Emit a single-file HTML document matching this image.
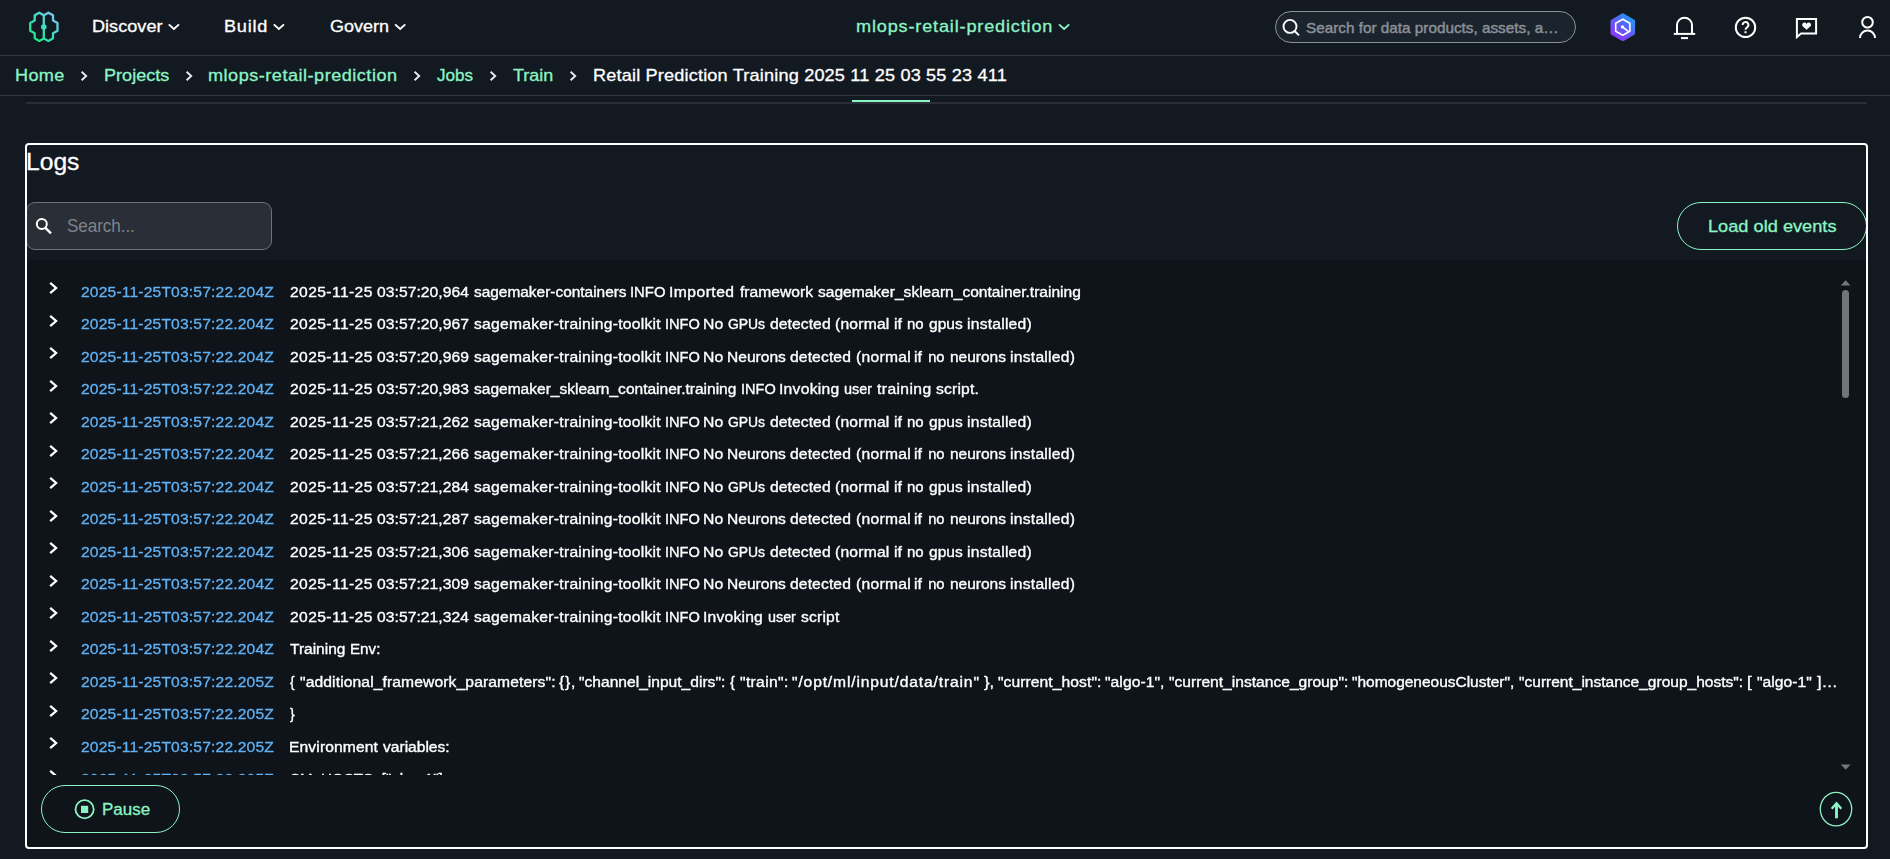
<!DOCTYPE html>
<html lang="en"><head><meta charset="utf-8"><title>Logs - Retail Prediction Training</title>
<style>
*{box-sizing:border-box;margin:0;padding:0}
html,body{width:1890px;height:859px;overflow:hidden;background:#131920;font-family:"Liberation Sans",sans-serif}
body{position:relative}
.t{position:absolute;white-space:pre;line-height:1;font-weight:400;transform-origin:0 0}
.t.m{-webkit-text-stroke:0.3px currentColor}
.t.sb{-webkit-text-stroke:0.45px currentColor}
.t.ts{-webkit-text-stroke:0.3px currentColor}
.logview .t.m{-webkit-text-stroke:0.36px currentColor}
.logview div{position:absolute;left:0;top:0}
.abs{position:absolute}
.hl{position:absolute;background:#292e38}
.panel{position:absolute;left:25px;top:143px;width:1843px;height:706px;border:2px solid #fff;border-radius:4px;z-index:3}
.logbg{position:absolute;left:27px;top:260px;width:1839px;height:587px;background:#0f131a}
.logview{position:absolute;left:27px;top:260px;width:1839px;height:515.2px;overflow:hidden;will-change:transform}
.rc{position:absolute}
.search{position:absolute;left:1275px;top:11px;width:301px;height:32px;border:1px solid #8d9199;border-radius:16px;background:#1b232d}
.lsearch{position:absolute;left:26px;top:202px;width:246px;height:48px;border:1px solid #6d7179;border-radius:9px;background:#2a2e37}
.pill{position:absolute;border:1px solid #8bf4c5;border-radius:24px;height:48px}
svg{position:absolute;overflow:visible}
</style></head><body>
<div class="hl" style="left:0;top:55px;width:1890px;height:1px;background:#333740"></div>
<div class="hl" style="left:0;top:95px;width:1890px;height:1px;background:#333740"></div>
<div class="hl" style="left:26px;top:102px;width:1841px;height:2px"></div>
<div class="abs" style="left:852px;top:100px;width:78px;height:2px;background:#8bf4c5"></div>
<div class="logbg"></div>
<div class="panel"></div>
<div class="search"></div>
<div class="lsearch"></div>
<div class="pill" style="left:1677px;top:202px;width:190px"></div>
<div class="pill" style="left:41px;top:785px;width:139px"></div>
<svg width="1890" height="110" viewBox="0 0 1890 110" style="left:0;top:0">
<defs>
<linearGradient id="lg" x1="30" y1="41" x2="58" y2="13" gradientUnits="userSpaceOnUse"><stop offset="0" stop-color="#12e56f"/><stop offset="0.5" stop-color="#3fdcc0"/><stop offset="1" stop-color="#86c4ff"/></linearGradient>
<linearGradient id="qg" x1="1614" y1="38" x2="1632" y2="16" gradientUnits="userSpaceOnUse"><stop offset="0" stop-color="#8d36f5"/><stop offset="0.5" stop-color="#5f5cf6"/><stop offset="1" stop-color="#1a9ff6"/></linearGradient>
</defs>
<!-- logo -->
<g fill="none" stroke="url(#lg)" stroke-width="2.3" stroke-linejoin="round" stroke-linecap="round">
<path d="M43.8 15.2 L39.3 12.7 L34.7 15.3 L34.7 20.6 L30.2 22.9 L30.2 30.7 L34.7 33.2 L34.7 38.3 L39.3 40.9 L43.8 38.5 L48.4 40.9 L53 38.3 L53 33.2 L57.5 30.7 L57.5 22.9 L53 20.6 L53 15.3 L48.4 12.7 Z"/>
<path d="M43.8 15.2 V38.5"/>
</g>
<circle cx="43.8" cy="27" r="2.8" fill="#3fdcc0"/>
<!-- nav chevrons -->
<g fill="none" stroke="#fff" stroke-width="1.9">
<path d="M168.8 24.4 L173.9 29 L179 24.4"/>
<path d="M273.8 24.4 L278.9 29 L284 24.4"/>
<path d="M395.1 24.4 L400.2 29 L405.3 24.4"/>
</g>
<path d="M1059 24.4 L1064.1 29 L1069.2 24.4" fill="none" stroke="#8bf4c5" stroke-width="1.9"/>
<!-- breadcrumb chevrons -->
<g fill="none" stroke="#e8eaee" stroke-width="1.9">
<path d="M81.6 71.7 L86.2 76 L81.6 80.3"/>
<path d="M186.6 71.7 L191.2 76 L186.6 80.3"/>
<path d="M414.6 71.7 L419.2 76 L414.6 80.3"/>
<path d="M490.6 71.7 L495.2 76 L490.6 80.3"/>
<path d="M570.6 71.7 L575.2 76 L570.6 80.3"/>
</g>
<!-- search icon -->
<g fill="none" stroke="#fff" stroke-width="1.9"><circle cx="1290" cy="26.4" r="6.5"/><path d="M1294.6 31 L1299 35.4"/></g>
<!-- Q -->
<path d="M1622.8 14.9 L1633.5 21.05 L1633.5 33.35 L1622.8 39.5 L1612.1 33.35 L1612.1 21.05 Z" fill="url(#qg)" stroke="url(#qg)" stroke-width="3.2" stroke-linejoin="round"/>
<g fill="none" stroke="#fff" stroke-width="1.6" stroke-linejoin="round"><path d="M1622.8 19.2 L1629.9 23.2 L1629.9 31.2 L1622.8 35.2 L1615.7 31.2 L1615.7 23.2 Z"/><path d="M1622.6 27 L1628.6 31.6"/></g>
<circle cx="1622.5" cy="26.9" r="1.7" fill="#fff"/>
<!-- bell -->
<g fill="none" stroke="#fff" stroke-width="2"><path d="M1677 33.9 V25.2 a7.5 7.5 0 0 1 15 0 V33.9"/><path d="M1673.8 33.9 H1695.2"/><path d="M1681 38.1 H1688"/></g>
<!-- help -->
<circle cx="1745.5" cy="27.4" r="9.7" fill="none" stroke="#fff" stroke-width="2"/>
<path d="M1742.6 25 a2.9 2.9 0 1 1 4.4 2.4 c-1 .6 -1.5 1.1 -1.5 2.4" fill="none" stroke="#fff" stroke-width="1.9"/>
<rect x="1744.5" y="31.2" width="2" height="2" fill="#fff"/>
<!-- feedback -->
<path d="M1796.9 37 V19 H1816.1 V33.6 H1801 Z" fill="none" stroke="#fff" stroke-width="2" stroke-linejoin="miter"/>
<path d="M1806.6 29.8 L1802.4 25.9 a2.3 2.3 0 0 1 4.2 -2 a2.3 2.3 0 0 1 4.2 2 Z" fill="#fff"/>
<!-- user -->
<g fill="none" stroke="#fff" stroke-width="2"><circle cx="1867.5" cy="22.3" r="5.3"/><path d="M1860 38.1 a7.5 7.5 0 0 1 15 0"/></g>
</svg>
<!-- panel icons -->
<svg width="1890" height="859" viewBox="0 0 1890 859" style="left:0;top:0;pointer-events:none">
<g fill="none" stroke="#fff" stroke-width="2"><circle cx="41.8" cy="224" r="5"/><path d="M45.4 227.8 L51 233.4" stroke-width="2.4"/></g>
<!-- pause icon -->
<circle cx="84.6" cy="809.3" r="9.1" fill="none" stroke="#8bf4c5" stroke-width="1.8"/>
<rect x="81" y="805.8" width="7.2" height="7.2" fill="#8bf4c5"/>
<!-- scroll to top -->
<ellipse cx="1836" cy="809.1" rx="15.7" ry="16.8" fill="none" stroke="#8bf4c5" stroke-width="1.3"/>
<path d="M1836.5 818.3 V803.5" fill="none" stroke="#8bf4c5" stroke-width="2.9"/><path d="M1831.7 808.7 L1836.5 803.3 L1841.3 808.7" fill="none" stroke="#8bf4c5" stroke-width="2.4"/>
<!-- scrollbar -->
<path d="M1840.8 285.4 L1845.6 280.2 L1850.4 285.4 Z" fill="#74777c"/>
<rect x="1842" y="290" width="7" height="108" rx="3.5" fill="#717479"/>
<path d="M1840.8 764.6 L1850.6 764.6 L1845.7 769.8 Z" fill="#74777c"/>
</svg>
<span class="t m" style="left:91.53px;top:18.21px;font-size:17.0px;color:#fff;transform:scaleX(1.0650);letter-spacing:0.011px">Discover</span>
<span class="t m" style="left:224.24px;top:18.21px;font-size:17.0px;color:#fff;transform:scaleX(1.0650);letter-spacing:0.725px">Build</span>
<span class="t m" style="left:330.00px;top:18.21px;font-size:17.0px;color:#fff;transform:scaleX(1.0580)">Govern</span>
<span class="t m" style="left:856.33px;top:18.21px;font-size:17.0px;color:#8bf4c5;transform:scaleX(1.0650);letter-spacing:0.783px">mlops-retail-prediction</span>
<span class="t sb" style="left:1306.00px;top:19.80px;font-size:15.0px;color:#8b9098;transform:scaleX(1.0194)">Search for data products, assets, a…</span>
<span class="t m" style="left:15.44px;top:67.31px;font-size:17.0px;color:#8bf4c5;transform:scaleX(1.0650);letter-spacing:0.299px">Home</span>
<span class="t m" style="left:103.84px;top:67.31px;font-size:17.0px;color:#8bf4c5;transform:scaleX(1.0649)">Projects</span>
<span class="t m" style="left:207.94px;top:67.31px;font-size:17.0px;color:#8bf4c5;transform:scaleX(1.0650);letter-spacing:0.467px">mlops-retail-prediction</span>
<span class="t m" style="left:437.00px;top:67.31px;font-size:17.0px;color:#8bf4c5;transform:scaleX(1.0054)">Jobs</span>
<span class="t m" style="left:512.90px;top:67.31px;font-size:17.0px;color:#8bf4c5;transform:scaleX(1.0572)">Train</span>
<span class="t m" style="left:592.93px;top:67.31px;font-size:17.0px;color:#fff;transform:scaleX(1.0650);letter-spacing:0.168px">Retail Prediction Training 2025 11 25 03 55 23 411</span>
<span class="t m" style="left:25.87px;top:150.28px;font-size:24px;color:#fff;transform:scaleX(1.0266)">Logs</span>
<span class="t" style="left:67.10px;top:216.96px;font-size:18px;color:#7d828a;transform:scaleX(0.9500);letter-spacing:-0.077px">Search...</span>
<span class="t m" style="left:1707.65px;top:217.57px;font-size:17.4px;color:#8bf4c5;transform:scaleX(1.0467)">Load old events</span>
<span class="t m" style="left:101.51px;top:800.54px;font-size:17.2px;color:#8bf4c5;transform:scaleX(0.9878)">Pause</span>
<div class="logview">
<svg class="rc" style="left:22.0px;top:21.20px" width="10" height="14" viewBox="0 0 10 14"><path d="M1.2 1.8 L7.1 7 L1.2 12.2" fill="none" stroke="#fff" stroke-width="2.3"/></svg>
<svg class="rc" style="left:22.0px;top:53.70px" width="10" height="14" viewBox="0 0 10 14"><path d="M1.2 1.8 L7.1 7 L1.2 12.2" fill="none" stroke="#fff" stroke-width="2.3"/></svg>
<svg class="rc" style="left:22.0px;top:86.20px" width="10" height="14" viewBox="0 0 10 14"><path d="M1.2 1.8 L7.1 7 L1.2 12.2" fill="none" stroke="#fff" stroke-width="2.3"/></svg>
<svg class="rc" style="left:22.0px;top:118.70px" width="10" height="14" viewBox="0 0 10 14"><path d="M1.2 1.8 L7.1 7 L1.2 12.2" fill="none" stroke="#fff" stroke-width="2.3"/></svg>
<svg class="rc" style="left:22.0px;top:151.20px" width="10" height="14" viewBox="0 0 10 14"><path d="M1.2 1.8 L7.1 7 L1.2 12.2" fill="none" stroke="#fff" stroke-width="2.3"/></svg>
<svg class="rc" style="left:22.0px;top:183.70px" width="10" height="14" viewBox="0 0 10 14"><path d="M1.2 1.8 L7.1 7 L1.2 12.2" fill="none" stroke="#fff" stroke-width="2.3"/></svg>
<svg class="rc" style="left:22.0px;top:216.20px" width="10" height="14" viewBox="0 0 10 14"><path d="M1.2 1.8 L7.1 7 L1.2 12.2" fill="none" stroke="#fff" stroke-width="2.3"/></svg>
<svg class="rc" style="left:22.0px;top:248.70px" width="10" height="14" viewBox="0 0 10 14"><path d="M1.2 1.8 L7.1 7 L1.2 12.2" fill="none" stroke="#fff" stroke-width="2.3"/></svg>
<svg class="rc" style="left:22.0px;top:281.20px" width="10" height="14" viewBox="0 0 10 14"><path d="M1.2 1.8 L7.1 7 L1.2 12.2" fill="none" stroke="#fff" stroke-width="2.3"/></svg>
<svg class="rc" style="left:22.0px;top:313.70px" width="10" height="14" viewBox="0 0 10 14"><path d="M1.2 1.8 L7.1 7 L1.2 12.2" fill="none" stroke="#fff" stroke-width="2.3"/></svg>
<svg class="rc" style="left:22.0px;top:346.20px" width="10" height="14" viewBox="0 0 10 14"><path d="M1.2 1.8 L7.1 7 L1.2 12.2" fill="none" stroke="#fff" stroke-width="2.3"/></svg>
<svg class="rc" style="left:22.0px;top:378.70px" width="10" height="14" viewBox="0 0 10 14"><path d="M1.2 1.8 L7.1 7 L1.2 12.2" fill="none" stroke="#fff" stroke-width="2.3"/></svg>
<svg class="rc" style="left:22.0px;top:411.20px" width="10" height="14" viewBox="0 0 10 14"><path d="M1.2 1.8 L7.1 7 L1.2 12.2" fill="none" stroke="#fff" stroke-width="2.3"/></svg>
<svg class="rc" style="left:22.0px;top:443.70px" width="10" height="14" viewBox="0 0 10 14"><path d="M1.2 1.8 L7.1 7 L1.2 12.2" fill="none" stroke="#fff" stroke-width="2.3"/></svg>
<svg class="rc" style="left:22.0px;top:476.20px" width="10" height="14" viewBox="0 0 10 14"><path d="M1.2 1.8 L7.1 7 L1.2 12.2" fill="none" stroke="#fff" stroke-width="2.3"/></svg>
<svg class="rc" style="left:22.0px;top:508.70px" width="10" height="14" viewBox="0 0 10 14"><path d="M1.2 1.8 L7.1 7 L1.2 12.2" fill="none" stroke="#fff" stroke-width="2.3"/></svg>
<div class="ts"><span class="t ts" style="left:54.10px;top:24.86px;font-size:14.7px;color:#60b2f4;transform:scaleX(1.0650);letter-spacing:0.146px">2025-11-25T03:57:22.204Z</span></div>
<div class="msg"><span class="t m" style="left:263.00px;top:24.86px;font-size:14.7px;color:#fff;transform:scaleX(1.0650);letter-spacing:0.368px">2025-11-25 </span><span class="t m" style="left:350.10px;top:24.86px;font-size:14.7px;color:#fff;transform:scaleX(1.0650);letter-spacing:0.055px">03:57:20,964 </span><span class="t m" style="left:446.80px;top:24.86px;font-size:14.7px;color:#fff;transform:scaleX(1.0499)">sagemaker-containers </span><span class="t m" style="left:603.09px;top:24.86px;font-size:14.7px;color:#fff;transform:scaleX(1.0101)">INFO </span><span class="t m" style="left:642.33px;top:24.86px;font-size:14.7px;color:#fff;transform:scaleX(1.0650);letter-spacing:0.445px">Imported </span><span class="t m" style="left:712.60px;top:24.86px;font-size:14.7px;color:#fff;transform:scaleX(1.0649)">framework </span><span class="t m" style="left:791.40px;top:24.86px;font-size:14.7px;color:#fff;transform:scaleX(1.0591)">sagemaker_sklearn_container.training</span></div>
<div class="ts"><span class="t ts" style="left:54.10px;top:57.36px;font-size:14.7px;color:#60b2f4;transform:scaleX(1.0650);letter-spacing:0.146px">2025-11-25T03:57:22.204Z</span></div>
<div class="msg"><span class="t m" style="left:263.00px;top:57.36px;font-size:14.7px;color:#fff;transform:scaleX(1.0650);letter-spacing:0.368px">2025-11-25 </span><span class="t m" style="left:350.10px;top:57.36px;font-size:14.7px;color:#fff;transform:scaleX(1.0650);letter-spacing:0.055px">03:57:20,967 </span><span class="t m" style="left:446.80px;top:57.36px;font-size:14.7px;color:#fff;transform:scaleX(1.0650);letter-spacing:0.253px">sagemaker-training-toolkit </span><span class="t m" style="left:638.00px;top:57.36px;font-size:14.7px;color:#fff;transform:scaleX(0.9953)">INFO </span><span class="t m" style="left:676.33px;top:57.36px;font-size:14.7px;color:#fff;transform:scaleX(1.0734)">No </span><span class="t m" style="left:701.20px;top:57.36px;font-size:14.7px;color:#fff;transform:scaleX(0.9500);letter-spacing:-0.065px">GPUs </span><span class="t m" style="left:742.60px;top:57.36px;font-size:14.7px;color:#fff;transform:scaleX(1.0650);letter-spacing:0.076px">detected </span><span class="t m" style="left:807.90px;top:57.36px;font-size:14.7px;color:#fff;transform:scaleX(1.0650);letter-spacing:0.197px">(normal </span><span class="t m" style="left:866.80px;top:57.36px;font-size:14.7px;color:#fff;transform:scaleX(1.0771)">if </span><span class="t m" style="left:880.30px;top:57.36px;font-size:14.7px;color:#fff;transform:scaleX(1.0205)">no </span><span class="t m" style="left:901.90px;top:57.36px;font-size:14.7px;color:#fff;transform:scaleX(1.0570)">gpus </span><span class="t m" style="left:939.70px;top:57.36px;font-size:14.7px;color:#fff;transform:scaleX(1.0650);letter-spacing:0.214px">installed)</span></div>
<div class="ts"><span class="t ts" style="left:54.10px;top:89.86px;font-size:14.7px;color:#60b2f4;transform:scaleX(1.0650);letter-spacing:0.146px">2025-11-25T03:57:22.204Z</span></div>
<div class="msg"><span class="t m" style="left:263.00px;top:89.86px;font-size:14.7px;color:#fff;transform:scaleX(1.0650);letter-spacing:0.368px">2025-11-25 </span><span class="t m" style="left:350.10px;top:89.86px;font-size:14.7px;color:#fff;transform:scaleX(1.0650);letter-spacing:0.055px">03:57:20,969 </span><span class="t m" style="left:446.80px;top:89.86px;font-size:14.7px;color:#fff;transform:scaleX(1.0650);letter-spacing:0.253px">sagemaker-training-toolkit </span><span class="t m" style="left:638.00px;top:89.86px;font-size:14.7px;color:#fff;transform:scaleX(0.9953)">INFO </span><span class="t m" style="left:676.33px;top:89.86px;font-size:14.7px;color:#fff;transform:scaleX(1.0734)">No </span><span class="t m" style="left:700.14px;top:89.86px;font-size:14.7px;color:#fff;transform:scaleX(1.0596)">Neurons </span><span class="t m" style="left:763.00px;top:89.86px;font-size:14.7px;color:#fff;transform:scaleX(1.0650);letter-spacing:0.117px">detected </span><span class="t m" style="left:828.60px;top:89.86px;font-size:14.7px;color:#fff;transform:scaleX(1.0650);letter-spacing:0.260px">(normal </span><span class="t m" style="left:887.40px;top:89.86px;font-size:14.7px;color:#fff;transform:scaleX(1.0771)">if </span><span class="t m" style="left:901.20px;top:89.86px;font-size:14.7px;color:#fff">no </span><span class="t m" style="left:923.00px;top:89.86px;font-size:14.7px;color:#fff;transform:scaleX(1.0544)">neurons </span><span class="t m" style="left:983.00px;top:89.86px;font-size:14.7px;color:#fff;transform:scaleX(1.0650);letter-spacing:0.245px">installed)</span></div>
<div class="ts"><span class="t ts" style="left:54.10px;top:122.36px;font-size:14.7px;color:#60b2f4;transform:scaleX(1.0650);letter-spacing:0.146px">2025-11-25T03:57:22.204Z</span></div>
<div class="msg"><span class="t m" style="left:263.00px;top:122.36px;font-size:14.7px;color:#fff;transform:scaleX(1.0650);letter-spacing:0.368px">2025-11-25 </span><span class="t m" style="left:350.10px;top:122.36px;font-size:14.7px;color:#fff;transform:scaleX(1.0650);letter-spacing:0.055px">03:57:20,983 </span><span class="t m" style="left:446.80px;top:122.36px;font-size:14.7px;color:#fff;transform:scaleX(1.0571)">sagemaker_sklearn_container.training </span><span class="t m" style="left:713.61px;top:122.36px;font-size:14.7px;color:#fff;transform:scaleX(0.9893)">INFO </span><span class="t m" style="left:751.93px;top:122.36px;font-size:14.7px;color:#fff;transform:scaleX(1.0650);letter-spacing:0.253px">Invoking </span><span class="t m" style="left:817.00px;top:122.36px;font-size:14.7px;color:#fff;transform:scaleX(0.9832)">user </span><span class="t m" style="left:850.10px;top:122.36px;font-size:14.7px;color:#fff;transform:scaleX(1.0650);letter-spacing:0.386px">training </span><span class="t m" style="left:908.60px;top:122.36px;font-size:14.7px;color:#fff;transform:scaleX(1.0650);letter-spacing:0.177px">script.</span></div>
<div class="ts"><span class="t ts" style="left:54.10px;top:154.86px;font-size:14.7px;color:#60b2f4;transform:scaleX(1.0650);letter-spacing:0.146px">2025-11-25T03:57:22.204Z</span></div>
<div class="msg"><span class="t m" style="left:263.00px;top:154.86px;font-size:14.7px;color:#fff;transform:scaleX(1.0650);letter-spacing:0.368px">2025-11-25 </span><span class="t m" style="left:350.10px;top:154.86px;font-size:14.7px;color:#fff;transform:scaleX(1.0650);letter-spacing:0.055px">03:57:21,262 </span><span class="t m" style="left:446.80px;top:154.86px;font-size:14.7px;color:#fff;transform:scaleX(1.0650);letter-spacing:0.253px">sagemaker-training-toolkit </span><span class="t m" style="left:638.00px;top:154.86px;font-size:14.7px;color:#fff;transform:scaleX(0.9953)">INFO </span><span class="t m" style="left:676.33px;top:154.86px;font-size:14.7px;color:#fff;transform:scaleX(1.0734)">No </span><span class="t m" style="left:701.20px;top:154.86px;font-size:14.7px;color:#fff;transform:scaleX(0.9500);letter-spacing:-0.065px">GPUs </span><span class="t m" style="left:742.60px;top:154.86px;font-size:14.7px;color:#fff;transform:scaleX(1.0650);letter-spacing:0.076px">detected </span><span class="t m" style="left:807.90px;top:154.86px;font-size:14.7px;color:#fff;transform:scaleX(1.0650);letter-spacing:0.197px">(normal </span><span class="t m" style="left:866.80px;top:154.86px;font-size:14.7px;color:#fff;transform:scaleX(1.0771)">if </span><span class="t m" style="left:880.30px;top:154.86px;font-size:14.7px;color:#fff;transform:scaleX(1.0205)">no </span><span class="t m" style="left:901.90px;top:154.86px;font-size:14.7px;color:#fff;transform:scaleX(1.0570)">gpus </span><span class="t m" style="left:939.70px;top:154.86px;font-size:14.7px;color:#fff;transform:scaleX(1.0650);letter-spacing:0.214px">installed)</span></div>
<div class="ts"><span class="t ts" style="left:54.10px;top:187.36px;font-size:14.7px;color:#60b2f4;transform:scaleX(1.0650);letter-spacing:0.146px">2025-11-25T03:57:22.204Z</span></div>
<div class="msg"><span class="t m" style="left:263.00px;top:187.36px;font-size:14.7px;color:#fff;transform:scaleX(1.0650);letter-spacing:0.368px">2025-11-25 </span><span class="t m" style="left:350.10px;top:187.36px;font-size:14.7px;color:#fff;transform:scaleX(1.0650);letter-spacing:0.055px">03:57:21,266 </span><span class="t m" style="left:446.80px;top:187.36px;font-size:14.7px;color:#fff;transform:scaleX(1.0650);letter-spacing:0.253px">sagemaker-training-toolkit </span><span class="t m" style="left:638.00px;top:187.36px;font-size:14.7px;color:#fff;transform:scaleX(0.9953)">INFO </span><span class="t m" style="left:676.33px;top:187.36px;font-size:14.7px;color:#fff;transform:scaleX(1.0734)">No </span><span class="t m" style="left:700.14px;top:187.36px;font-size:14.7px;color:#fff;transform:scaleX(1.0596)">Neurons </span><span class="t m" style="left:763.00px;top:187.36px;font-size:14.7px;color:#fff;transform:scaleX(1.0650);letter-spacing:0.117px">detected </span><span class="t m" style="left:828.60px;top:187.36px;font-size:14.7px;color:#fff;transform:scaleX(1.0650);letter-spacing:0.260px">(normal </span><span class="t m" style="left:887.40px;top:187.36px;font-size:14.7px;color:#fff;transform:scaleX(1.0771)">if </span><span class="t m" style="left:901.20px;top:187.36px;font-size:14.7px;color:#fff">no </span><span class="t m" style="left:923.00px;top:187.36px;font-size:14.7px;color:#fff;transform:scaleX(1.0544)">neurons </span><span class="t m" style="left:983.00px;top:187.36px;font-size:14.7px;color:#fff;transform:scaleX(1.0650);letter-spacing:0.245px">installed)</span></div>
<div class="ts"><span class="t ts" style="left:54.10px;top:219.86px;font-size:14.7px;color:#60b2f4;transform:scaleX(1.0650);letter-spacing:0.146px">2025-11-25T03:57:22.204Z</span></div>
<div class="msg"><span class="t m" style="left:263.00px;top:219.86px;font-size:14.7px;color:#fff;transform:scaleX(1.0650);letter-spacing:0.368px">2025-11-25 </span><span class="t m" style="left:350.10px;top:219.86px;font-size:14.7px;color:#fff;transform:scaleX(1.0650);letter-spacing:0.055px">03:57:21,284 </span><span class="t m" style="left:446.80px;top:219.86px;font-size:14.7px;color:#fff;transform:scaleX(1.0650);letter-spacing:0.253px">sagemaker-training-toolkit </span><span class="t m" style="left:638.00px;top:219.86px;font-size:14.7px;color:#fff;transform:scaleX(0.9953)">INFO </span><span class="t m" style="left:676.33px;top:219.86px;font-size:14.7px;color:#fff;transform:scaleX(1.0734)">No </span><span class="t m" style="left:701.20px;top:219.86px;font-size:14.7px;color:#fff;transform:scaleX(0.9500);letter-spacing:-0.065px">GPUs </span><span class="t m" style="left:742.60px;top:219.86px;font-size:14.7px;color:#fff;transform:scaleX(1.0650);letter-spacing:0.076px">detected </span><span class="t m" style="left:807.90px;top:219.86px;font-size:14.7px;color:#fff;transform:scaleX(1.0650);letter-spacing:0.197px">(normal </span><span class="t m" style="left:866.80px;top:219.86px;font-size:14.7px;color:#fff;transform:scaleX(1.0771)">if </span><span class="t m" style="left:880.30px;top:219.86px;font-size:14.7px;color:#fff;transform:scaleX(1.0205)">no </span><span class="t m" style="left:901.90px;top:219.86px;font-size:14.7px;color:#fff;transform:scaleX(1.0570)">gpus </span><span class="t m" style="left:939.70px;top:219.86px;font-size:14.7px;color:#fff;transform:scaleX(1.0650);letter-spacing:0.214px">installed)</span></div>
<div class="ts"><span class="t ts" style="left:54.10px;top:252.36px;font-size:14.7px;color:#60b2f4;transform:scaleX(1.0650);letter-spacing:0.146px">2025-11-25T03:57:22.204Z</span></div>
<div class="msg"><span class="t m" style="left:263.00px;top:252.36px;font-size:14.7px;color:#fff;transform:scaleX(1.0650);letter-spacing:0.368px">2025-11-25 </span><span class="t m" style="left:350.10px;top:252.36px;font-size:14.7px;color:#fff;transform:scaleX(1.0650);letter-spacing:0.055px">03:57:21,287 </span><span class="t m" style="left:446.80px;top:252.36px;font-size:14.7px;color:#fff;transform:scaleX(1.0650);letter-spacing:0.253px">sagemaker-training-toolkit </span><span class="t m" style="left:638.00px;top:252.36px;font-size:14.7px;color:#fff;transform:scaleX(0.9953)">INFO </span><span class="t m" style="left:676.33px;top:252.36px;font-size:14.7px;color:#fff;transform:scaleX(1.0734)">No </span><span class="t m" style="left:700.14px;top:252.36px;font-size:14.7px;color:#fff;transform:scaleX(1.0596)">Neurons </span><span class="t m" style="left:763.00px;top:252.36px;font-size:14.7px;color:#fff;transform:scaleX(1.0650);letter-spacing:0.117px">detected </span><span class="t m" style="left:828.60px;top:252.36px;font-size:14.7px;color:#fff;transform:scaleX(1.0650);letter-spacing:0.260px">(normal </span><span class="t m" style="left:887.40px;top:252.36px;font-size:14.7px;color:#fff;transform:scaleX(1.0771)">if </span><span class="t m" style="left:901.20px;top:252.36px;font-size:14.7px;color:#fff">no </span><span class="t m" style="left:923.00px;top:252.36px;font-size:14.7px;color:#fff;transform:scaleX(1.0544)">neurons </span><span class="t m" style="left:983.00px;top:252.36px;font-size:14.7px;color:#fff;transform:scaleX(1.0650);letter-spacing:0.245px">installed)</span></div>
<div class="ts"><span class="t ts" style="left:54.10px;top:284.86px;font-size:14.7px;color:#60b2f4;transform:scaleX(1.0650);letter-spacing:0.146px">2025-11-25T03:57:22.204Z</span></div>
<div class="msg"><span class="t m" style="left:263.00px;top:284.86px;font-size:14.7px;color:#fff;transform:scaleX(1.0650);letter-spacing:0.368px">2025-11-25 </span><span class="t m" style="left:350.10px;top:284.86px;font-size:14.7px;color:#fff;transform:scaleX(1.0650);letter-spacing:0.055px">03:57:21,306 </span><span class="t m" style="left:446.80px;top:284.86px;font-size:14.7px;color:#fff;transform:scaleX(1.0650);letter-spacing:0.253px">sagemaker-training-toolkit </span><span class="t m" style="left:638.00px;top:284.86px;font-size:14.7px;color:#fff;transform:scaleX(0.9953)">INFO </span><span class="t m" style="left:676.33px;top:284.86px;font-size:14.7px;color:#fff;transform:scaleX(1.0734)">No </span><span class="t m" style="left:701.20px;top:284.86px;font-size:14.7px;color:#fff;transform:scaleX(0.9500);letter-spacing:-0.065px">GPUs </span><span class="t m" style="left:742.60px;top:284.86px;font-size:14.7px;color:#fff;transform:scaleX(1.0650);letter-spacing:0.076px">detected </span><span class="t m" style="left:807.90px;top:284.86px;font-size:14.7px;color:#fff;transform:scaleX(1.0650);letter-spacing:0.197px">(normal </span><span class="t m" style="left:866.80px;top:284.86px;font-size:14.7px;color:#fff;transform:scaleX(1.0771)">if </span><span class="t m" style="left:880.30px;top:284.86px;font-size:14.7px;color:#fff;transform:scaleX(1.0205)">no </span><span class="t m" style="left:901.90px;top:284.86px;font-size:14.7px;color:#fff;transform:scaleX(1.0570)">gpus </span><span class="t m" style="left:939.70px;top:284.86px;font-size:14.7px;color:#fff;transform:scaleX(1.0650);letter-spacing:0.214px">installed)</span></div>
<div class="ts"><span class="t ts" style="left:54.10px;top:317.36px;font-size:14.7px;color:#60b2f4;transform:scaleX(1.0650);letter-spacing:0.146px">2025-11-25T03:57:22.204Z</span></div>
<div class="msg"><span class="t m" style="left:263.00px;top:317.36px;font-size:14.7px;color:#fff;transform:scaleX(1.0650);letter-spacing:0.368px">2025-11-25 </span><span class="t m" style="left:350.10px;top:317.36px;font-size:14.7px;color:#fff;transform:scaleX(1.0650);letter-spacing:0.055px">03:57:21,309 </span><span class="t m" style="left:446.80px;top:317.36px;font-size:14.7px;color:#fff;transform:scaleX(1.0650);letter-spacing:0.253px">sagemaker-training-toolkit </span><span class="t m" style="left:638.00px;top:317.36px;font-size:14.7px;color:#fff;transform:scaleX(0.9953)">INFO </span><span class="t m" style="left:676.33px;top:317.36px;font-size:14.7px;color:#fff;transform:scaleX(1.0734)">No </span><span class="t m" style="left:700.14px;top:317.36px;font-size:14.7px;color:#fff;transform:scaleX(1.0596)">Neurons </span><span class="t m" style="left:763.00px;top:317.36px;font-size:14.7px;color:#fff;transform:scaleX(1.0650);letter-spacing:0.117px">detected </span><span class="t m" style="left:828.60px;top:317.36px;font-size:14.7px;color:#fff;transform:scaleX(1.0650);letter-spacing:0.260px">(normal </span><span class="t m" style="left:887.40px;top:317.36px;font-size:14.7px;color:#fff;transform:scaleX(1.0771)">if </span><span class="t m" style="left:901.20px;top:317.36px;font-size:14.7px;color:#fff">no </span><span class="t m" style="left:923.00px;top:317.36px;font-size:14.7px;color:#fff;transform:scaleX(1.0544)">neurons </span><span class="t m" style="left:983.00px;top:317.36px;font-size:14.7px;color:#fff;transform:scaleX(1.0650);letter-spacing:0.245px">installed)</span></div>
<div class="ts"><span class="t ts" style="left:54.10px;top:349.86px;font-size:14.7px;color:#60b2f4;transform:scaleX(1.0650);letter-spacing:0.146px">2025-11-25T03:57:22.204Z</span></div>
<div class="msg"><span class="t m" style="left:263.00px;top:349.86px;font-size:14.7px;color:#fff;transform:scaleX(1.0650);letter-spacing:0.368px">2025-11-25 </span><span class="t m" style="left:350.10px;top:349.86px;font-size:14.7px;color:#fff;transform:scaleX(1.0650);letter-spacing:0.055px">03:57:21,324 </span><span class="t m" style="left:446.80px;top:349.86px;font-size:14.7px;color:#fff;transform:scaleX(1.0650);letter-spacing:0.253px">sagemaker-training-toolkit </span><span class="t m" style="left:638.00px;top:349.86px;font-size:14.7px;color:#fff;transform:scaleX(0.9953)">INFO </span><span class="t m" style="left:676.33px;top:349.86px;font-size:14.7px;color:#fff;transform:scaleX(1.0650);letter-spacing:0.199px">Invoking </span><span class="t m" style="left:741.20px;top:349.86px;font-size:14.7px;color:#fff;transform:scaleX(0.9763)">user </span><span class="t m" style="left:774.10px;top:349.86px;font-size:14.7px;color:#fff;transform:scaleX(1.0650);letter-spacing:0.172px">script</span></div>
<div class="ts"><span class="t ts" style="left:54.10px;top:382.36px;font-size:14.7px;color:#60b2f4;transform:scaleX(1.0650);letter-spacing:0.146px">2025-11-25T03:57:22.204Z</span></div>
<div class="msg"><span class="t m" style="left:263.40px;top:382.36px;font-size:14.7px;color:#fff;transform:scaleX(1.0545)">Training </span><span class="t m" style="left:322.67px;top:382.36px;font-size:14.7px;color:#fff;transform:scaleX(1.0326)">Env:</span></div>
<div class="ts"><span class="t ts" style="left:54.10px;top:414.86px;font-size:14.7px;color:#60b2f4;transform:scaleX(1.0650);letter-spacing:0.146px">2025-11-25T03:57:22.205Z</span></div>
<div class="msg"><span class="t m" style="left:263.40px;top:414.86px;font-size:14.7px;color:#fff;transform:scaleX(0.9400)">{ </span><span class="t m" style="left:273.00px;top:414.86px;font-size:14.7px;color:#fff;transform:scaleX(1.0650);letter-spacing:0.103px">"additional_framework_parameters": </span><span class="t m" style="left:532.30px;top:414.86px;font-size:14.7px;color:#fff;transform:scaleX(1.0650);letter-spacing:0.684px">{}, </span><span class="t m" style="left:552.30px;top:414.86px;font-size:14.7px;color:#fff;transform:scaleX(1.0612)">"channel_input_dirs": </span><span class="t m" style="left:703.00px;top:414.86px;font-size:14.7px;color:#fff;transform:scaleX(1.0200)">{ </span><span class="t m" style="left:713.00px;top:414.86px;font-size:14.7px;color:#fff;transform:scaleX(1.0650);letter-spacing:0.318px">"train": </span><span class="t m" style="left:765.20px;top:414.86px;font-size:14.7px;color:#fff;transform:scaleX(1.0650);letter-spacing:0.791px">"/opt/ml/input/data/train" </span><span class="t m" style="left:956.80px;top:414.86px;font-size:14.7px;color:#fff;transform:scaleX(1.1258)">}, </span><span class="t m" style="left:970.80px;top:414.86px;font-size:14.7px;color:#fff;transform:scaleX(1.0650);letter-spacing:0.064px">"current_host": </span><span class="t m" style="left:1078.10px;top:414.86px;font-size:14.7px;color:#fff;transform:scaleX(1.0650);letter-spacing:0.049px">"algo-1", </span><span class="t m" style="left:1141.90px;top:414.86px;font-size:14.7px;color:#fff;transform:scaleX(1.0623)">"current_instance_group": </span><span class="t m" style="left:1325.20px;top:414.86px;font-size:14.7px;color:#fff;transform:scaleX(1.0526)">"homogeneousCluster", </span><span class="t m" style="left:1491.90px;top:414.86px;font-size:14.7px;color:#fff;transform:scaleX(1.0563)">"current_instance_group_hosts": </span><span class="t m" style="left:1719.65px;top:414.86px;font-size:14.7px;color:#fff;transform:scaleX(1.1500)">[ </span><span class="t m" style="left:1730.10px;top:414.86px;font-size:14.7px;color:#fff;transform:scaleX(1.0650);letter-spacing:0.019px">"algo-1" </span><span class="t m" style="left:1790.30px;top:414.86px;font-size:14.7px;color:#fff;transform:scaleX(1.1065)">]…</span></div>
<div class="ts"><span class="t ts" style="left:54.10px;top:447.36px;font-size:14.7px;color:#60b2f4;transform:scaleX(1.0650);letter-spacing:0.146px">2025-11-25T03:57:22.205Z</span></div>
<div class="msg"><span class="t m" style="left:263.40px;top:447.36px;font-size:14.7px;color:#fff;transform:scaleX(0.9400)">}</span></div>
<div class="ts"><span class="t ts" style="left:54.10px;top:479.86px;font-size:14.7px;color:#60b2f4;transform:scaleX(1.0650);letter-spacing:0.146px">2025-11-25T03:57:22.205Z</span></div>
<div class="msg"><span class="t m" style="left:261.94px;top:479.86px;font-size:14.7px;color:#fff;transform:scaleX(1.0650);letter-spacing:0.107px">Environment </span><span class="t m" style="left:355.90px;top:479.86px;font-size:14.7px;color:#fff;transform:scaleX(1.0602)">variables:</span></div>
<div class="ts"><span class="t ts" style="left:54.10px;top:512.36px;font-size:14.7px;color:#60b2f4;transform:scaleX(1.0650);letter-spacing:0.146px">2025-11-25T03:57:22.205Z</span></div>
<div class="msg"><span class="t m" style="left:263.00px;top:512.36px;font-size:14.7px;color:#fff;transform:scaleX(1.0268)">SM_HOSTS=["algo-1"]</span></div>
</div>
</body></html>
